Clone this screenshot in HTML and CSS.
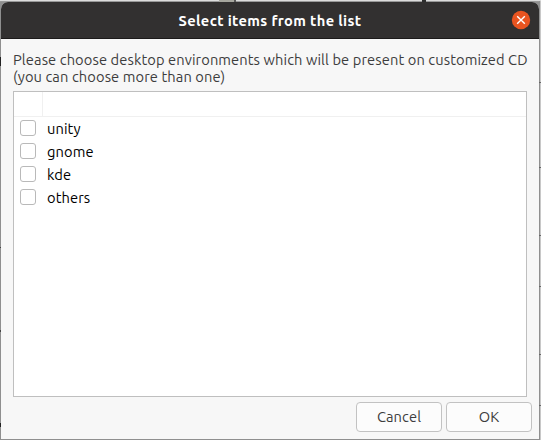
FILE: index.html
```
<!DOCTYPE html>
<html lang="en">
<head>
    <meta charset="UTF-8">
    <meta name="viewport" content="width=device-width, initial-scale=1.0">
    <title>Select items from the list</title>
    <link rel="stylesheet" href="styles.css">
</head>
<body>
    <div class="dialog">
        <div class="titlebar">
            <h1>Select items from the list</h1>
            <button class="close" aria-label="Close">
                <svg width="20" height="20" viewBox="0 0 20 20">
                    <circle cx="10" cy="10" r="9.2" fill="#e95420"/>
                    <path d="M6.2 6.2l7.6 7.6M13.8 6.2l-7.6 7.6" stroke="#fff" stroke-width="1.4" fill="none"/>
                </svg>
            </button>
        </div>

        <div class="content">
            <p class="message">Please choose desktop environments which will be present on customized CD<br>(you can choose more than one)</p>

            <div class="list">
                <div class="list-header"><span></span></div>
                <label class="row"><input type="checkbox"><span>unity</span></label>
                <label class="row"><input type="checkbox"><span>gnome</span></label>
                <label class="row"><input type="checkbox"><span>kde</span></label>
                <label class="row"><input type="checkbox"><span>others</span></label>
            </div>
        </div>

        <div class="buttons">
            <button class="btn">Cancel</button>
            <button class="btn">OK</button>
        </div>
    </div>
</body>
</html>
```
FILE: styles.css
```
* {
    box-sizing: border-box;
}
body {
    margin: 0;
    width: 541px;
    height: 440px;
    overflow: hidden;
    padding: 2px 2px 1px 1px;
    font-family: Ubuntu, "Noto Sans", sans-serif;
    font-size: 14.667px;
    letter-spacing: 0.1px;
    color: #3d3d3d;
    /* Edge of the desktop around the dialog */
    background:
        linear-gradient(#2d2d2d, #2d2d2d) 422px 0 / 4px 2px no-repeat,
        linear-gradient(#555, #555) 234px 0 / 2px 2px no-repeat,
        linear-gradient(#a5a59d, #a5a59d) 219px 0 / 15px 2px no-repeat,
        linear-gradient(#666, #666) 539px 82px / 2px 1px no-repeat,
        linear-gradient(#666, #666) 539px 167px / 2px 1px no-repeat,
        linear-gradient(#666, #666) 539px 235px / 2px 1px no-repeat,
        linear-gradient(#666, #666) 539px 286px / 2px 1px no-repeat,
        linear-gradient(#666, #666) 539px 354px / 2px 1px no-repeat,
        linear-gradient(#666, #666) 539px 405px / 2px 1px no-repeat,
        linear-gradient(#222, #222) 0 57px / 1px 9px no-repeat,
        linear-gradient(#444, #444) 0 247px / 1px 1px no-repeat,
        linear-gradient(#444, #444) 0 330px / 1px 2px no-repeat,
        linear-gradient(#222, #222) 0 423px / 1px 4px no-repeat,
        linear-gradient(#dcdcdc, #dcdcdc) 0 0 / 541px 1px no-repeat,
        linear-gradient(#999, #999) 0 1px / 539px 1px no-repeat,
        linear-gradient(#c8c8c8, #c8c8c8) 540px 0 / 1px 440px no-repeat,
        #8f8f8f;
}
.dialog {
    height: 437px;
    display: flex;
    flex-direction: column;
    background-color: #f7f7f7;
    border-radius: 7px 7px 0 0;
    overflow: hidden;
}
.titlebar {
    height: 37px;
    flex: none;
    display: grid;
    grid-template-columns: 28px 1fr 28px;
    align-items: center;
    background-color: #323030;
    border-bottom: 1px solid #1c1a1a;
}
.titlebar h1 {
    grid-column: 2;
    margin: 0;
    padding-top: 1px;
    font-size: 14.667px;
    line-height: 20px;
    letter-spacing: 0.35px;
    text-align: center;
    color: #fff;
}
.close {
    width: 20px;
    height: 20px;
    padding: 0;
    border: none;
    background: none;
}
.close svg {
    display: block;
}
.content {
    padding: 12px 12px 0;
}
.message {
    margin: 0;
    line-height: 17px;
    white-space: nowrap;
}
.list {
    height: 306px;
    margin-top: 6px;
    background-color: #fff;
    border: 1px solid #bfbfbf;
}
.list-header {
    height: 25px;
    border-bottom: 1px solid #f0f0f0;
}
.list-header span {
    display: block;
    width: 29px;
    height: 24px;
    border-right: 1px solid #f0f0f0;
}
.row {
    height: 23px;
    padding: 3px 0 0 6px;
    display: flex;
    align-items: flex-start;
    gap: 11px;
    line-height: 18px;
    color: #000;
}
.row input {
    appearance: none;
    width: 16px;
    height: 16px;
    margin: 0;
    background-color: #fff;
    border: 1px solid #b9b9b9;
    border-radius: 3px;
}
.buttons {
    padding: 5px 7px 0 0;
    display: flex;
    justify-content: flex-end;
    gap: 4px;
}
.btn {
    width: 86px;
    height: 30px;
    padding: 0 0 2px;
    font: inherit;
    letter-spacing: inherit;
    color: #3d3d3d;
    background-color: #fcfcfc;
    border: 1px solid #c2c2c2;
    border-radius: 4px;
}
```
